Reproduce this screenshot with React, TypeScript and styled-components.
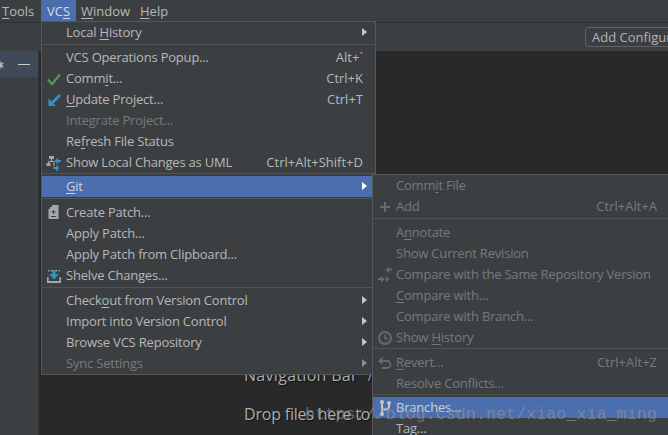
import React from "react";
import styled, { createGlobalStyle } from "styled-components";

const Global = createGlobalStyle`
  html, body { margin: 0; padding: 0; background: #3c3f41; }
  body { width: 668px; height: 435px; overflow: hidden; font-family: "Open Sans", "Noto Sans", sans-serif; }
  u { text-decoration: underline; text-underline-offset: 2px; text-decoration-thickness: 1px; }
`;

const Page = styled.div`
  position: relative;
  width: 668px;
  height: 435px;
  overflow: hidden;
  display: flex;
  flex-direction: column;
  color: #b6b8ba;
  font-size: 13px;
`;
const MenuBar = styled.div`
  height: 22px;
  flex: none;
  display: flex;
  background: #3c3f41;
  border-bottom: 1px solid #2f3132;
  padding-left: 2px;
`;
const MenuTitle = styled.div<{ $active?: boolean; $w: number; $gap?: number }>`
  width: ${(p) => p.$w}px;
  margin-right: ${(p) => p.$gap ?? 0}px;
  height: 21px;
  line-height: 22px;
  text-align: center;
  background: ${(p) => (p.$active ? "#4b6eaf" : "transparent")};
  color: ${(p) => (p.$active ? "#d6dce6" : "#b6b8ba")};
  white-space: nowrap;
`;
const ToolBar = styled.div`
  height: 28px;
  flex: none;
  display: flex;
  align-items: center;
  justify-content: flex-end;
  background: #3c3f41;
`;
const ConfigButton = styled.div`
  width: 100px;
  height: 20px;
  margin-right: -17px;
  box-sizing: border-box;
  border: 1px solid #5e6163;
  border-radius: 3px;
  padding-left: 6px;
  line-height: 19px;
  white-space: nowrap;
  overflow: hidden;
  color: #b0b3b5;
`;
const Body = styled.div`
  flex: 1;
  display: flex;
  min-height: 0;
`;
const Sidebar = styled.div`
  width: 38px;
  flex: none;
  background: #3c3f41;
  border-right: 1px solid #323435;
`;
const SideHeader = styled.div`
  height: 26px;
  background: #3e4a57;
  display: flex;
  align-items: center;
  justify-content: space-between;
  padding: 0 8px 0 0;
`;
const SideGlyph = styled.span`
  color: #b0b5ba;
  font-size: 11px;
  line-height: 1;
  margin-left: -5px;
`;
const HideBar = styled.span`
  width: 12px;
  height: 1px;
  background: #c8cacc;
`;
const Editor = styled.div`
  flex: 1;
  background: #292929;
  display: flex;
  flex-direction: column;
  padding: 314px 0 0 205px;
  color: #a9adb0;
  font-size: 16px;
  text-shadow: 1px 1px 1px #111;
`;
const Hint = styled.div<{ $gap?: number; $track: number }>`
  height: 20px;
  line-height: 20px;
  margin-bottom: ${(p) => p.$gap ?? 0}px;
  letter-spacing: ${(p) => p.$track}px;
  white-space: nowrap;
`;
const Slash = styled.span`
  color: #5a9bd8;
  margin-left: 10px;
`;
const Popup = styled.div<{ $left: number; $top: number; $w: number; $h: number }>`
  position: absolute;
  left: ${(p) => p.$left}px;
  top: ${(p) => p.$top}px;
  width: ${(p) => p.$w}px;
  height: ${(p) => p.$h}px;
  box-sizing: border-box;
  background: #3c3f41;
  border: 1px solid #555759;
  overflow: hidden;
`;
const Row = styled.div<{ $sel?: boolean; $off?: boolean; $pad: number }>`
  position: relative;
  height: 21px;
  box-sizing: border-box;
  display: flex;
  align-items: center;
  padding: 0 12px 2px ${(p) => p.$pad}px;
  background: ${(p) => (p.$sel ? "#4b6eaf" : "transparent")};
  color: ${(p) => (p.$off ? "#777a7c" : p.$sel ? "#c9d2e0" : "#b6b8ba")};
  white-space: nowrap;
`;
const Label = styled.span`
  flex: 1;
  letter-spacing: -0.2px;
`;
const Shortcut = styled.span`
  margin-right: 0;
`;
const Arrow = styled.span<{ $off?: boolean; $white?: boolean }>`
  position: absolute;
  right: 8px;
  top: 6px;
  width: 0;
  height: 0;
  border-left: 5px solid ${(p) => (p.$white ? "#ffffff" : p.$off ? "#8a8c8e" : "#c4c6c8")};
  border-top: 4px solid transparent;
  border-bottom: 4px solid transparent;
`;
const IconSlot = styled.span`
  position: absolute;
  left: 3px;
  top: 2px;
  width: 18px;
  height: 18px;
  display: block;
  svg { display: block; }
`;
const Sep = styled.div<{ $h: number; $at: number }>`
  height: ${(p) => p.$h}px;
  box-sizing: border-box;
  padding-top: ${(p) => p.$at}px;
  &::before {
    content: "";
    display: block;
    height: 1px;
    background: #515355;
  }
`;
const Watermark = styled.div`
  position: absolute;
  left: 305px;
  top: 405px;
  font-family: "Liberation Mono", monospace;
  font-size: 16.75px;
  line-height: 20px;
  color: rgba(150, 152, 155, 0.62);
  white-space: nowrap;
`;

const Mn = ({ t }: { t: string }) => {
  const i = t.indexOf("_");
  if (i < 0) return <>{t}</>;
  return (
    <>
      {t.slice(0, i)}
      <u>{t[i + 1]}</u>
      {t.slice(i + 2)}
    </>
  );
};

const icons: Record<string, React.ReactNode> = {
  check: (
    <svg width="18" height="18" viewBox="0 0 18 18">
      <path d="M3 9.5 L7 14 L15 4.5" fill="none" stroke="#499c54" strokeWidth="2.4" />
    </svg>
  ),
  update: (
    <svg width="18" height="18" viewBox="0 0 18 18">
      <path d="M15 4 L7.5 11.5" fill="none" stroke="#3592c4" strokeWidth="2.6" />
      <path d="M3.5 7.5 V15 H11 Z" fill="#3592c4" />
    </svg>
  ),
  uml: (
    <svg width="18" height="18" viewBox="0 0 18 18">
      <path d="M4 2h5v3H4z M1.5 9h4v3h-4z" fill="#a5a8aa" />
      <path d="M6.5 5v2.5M3.5 9V7.5H9V12" fill="none" stroke="#a5a8aa" />
      <path d="M16 6h-3V3.5L9.5 7l3.5 3.5V8h3z M11 11v2H8v2h3v2.5l3.5-3.5z" fill="#3592c4" />
    </svg>
  ),
  patch: (
    <svg width="18" height="18" viewBox="0 0 18 18">
      <path d="M7 1h6.500v14H3.500V5H5V3h2z" fill="#a5a8aa" />
      <path d="M8.500 6v4M6.500 8h4M6 12.500h5" stroke="#3c3f41" strokeWidth="1.100" fill="none" />
    </svg>
  ),
  shelve: (
    <svg width="18" height="18" viewBox="0 0 18 18">
      <path d="M2 10v6h14v-6h-1.600v4H3.600v-4z" fill="#a5a8aa" />
      <path d="M3 3h1.500v1.500H3z M6 3h1.500v1.500H6z M10.500 3H12v1.500h-1.500z M13.500 3H15v1.500h-1.500z" fill="#a5a8aa" />
      <path d="M7.500 3h3v4H14l-5 5.500L4 7h3.500z" fill="#3592c4" />
    </svg>
  ),
  plus: (
    <svg width="18" height="18" viewBox="0 0 18 18">
      <path d="M9 4v10M4 9h10" stroke="#666a6c" strokeWidth="2" fill="none" />
    </svg>
  ),
  compare: (
    <svg width="18" height="18" viewBox="0 0 18 18">
      <path d="M16 2.500v2h-3v2.500L9.500 4l3.500-3v1.500z M2 14h3v2.500L9 13 5 10v2H2z M10 10l3.500 3L10 16z" fill="#666a6c" />
    </svg>
  ),
  history: (
    <svg width="18" height="18" viewBox="0 0 18 18">
      <circle cx="9" cy="9" r="6" fill="none" stroke="#666a6c" strokeWidth="2" />
      <path d="M9 5.500V9.500H12" fill="none" stroke="#666a6c" strokeWidth="1.500" />
    </svg>
  ),
  revert: (
    <svg width="18" height="18" viewBox="0 0 18 18">
      <path d="M4 7h7a3.500 3.500 0 0 1 0 7H6" fill="none" stroke="#666a6c" strokeWidth="1.800" />
      <path d="M6.500 2.500v8.500L2 7z" fill="#666a6c" />
    </svg>
  ),
  branch: (
    <svg width="18" height="18" viewBox="0 0 18 18">
      <path d="M6 3v12M13 4v3.500q0 3-3.500 3H6" fill="none" stroke="#c4c8cc" strokeWidth="2" />
      <circle cx="6" cy="3" r="2" fill="#c4c8cc" />
      <circle cx="6" cy="15" r="2" fill="#c4c8cc" />
      <circle cx="13" cy="4" r="2" fill="#c4c8cc" />
    </svg>
  ),
};

type Item =
  | { sep: [number, number] }
  | { t: string; k?: string; off?: boolean; arrow?: boolean; icon?: string; sel?: boolean };

const mainItems: Item[] = [
  { t: "Local _History", arrow: true },
  { sep: [4, 1] },
  { t: "VCS Operations Popup...", k: "Alt+`" },
  { t: "Comm_it...", k: "Ctrl+K", icon: "check" },
  { t: "_Update Project...", k: "Ctrl+T", icon: "update" },
  { t: "Integrate Project...", off: true },
  { t: "Re_fresh File Status" },
  { t: "Show Local Changes as UML", k: "Ctrl+Alt+Shift+D", icon: "uml" },
  { sep: [3, 0] },
  { t: "_Git", arrow: true, sel: true },
  { sep: [5, 1] },
  { t: "Create Patch...", icon: "patch" },
  { t: "Apply Patch..." },
  { t: "Apply Patch from Clipboard..." },
  { t: "Shelve Changes...", icon: "shelve" },
  { sep: [4, 1] },
  { t: "Check_out from Version Control", arrow: true },
  { t: "Import into Version Control", arrow: true },
  { t: "Browse VCS Repository", arrow: true },
  { t: "Sync Settings", arrow: true, off: true },
];

const subItems: Item[] = [
  { t: "Comm_it File", off: true },
  { t: "Add", k: "Ctrl+Alt+A", off: true, icon: "plus" },
  { sep: [5, 1] },
  { t: "A_nnotate", off: true },
  { t: "Show Current Revision", off: true },
  { t: "Compare with the Same Repository Version", off: true, icon: "compare" },
  { t: "_Compare with...", off: true },
  { t: "Compare with Branch...", off: true },
  { t: "Show _History", off: true, icon: "history" },
  { sep: [4, 0] },
  { t: "_Revert...", k: "Ctrl+Alt+Z", off: true, icon: "revert" },
  { t: "Resolve Conflicts...", off: true },
  { sep: [3, 0] },
  { t: "Branches...", sel: true, icon: "branch" },
  { t: "Tag..." },
];

const MenuList = ({ items, pad }: { items: Item[]; pad: number }) => (
  <>
    {items.map((it, i) =>
      "sep" in it ? (
        <Sep key={i} $h={it.sep[0]} $at={it.sep[1]} />
      ) : (
        <Row key={i} $sel={it.sel} $off={it.off} $pad={pad}>
          {it.icon && <IconSlot>{icons[it.icon]}</IconSlot>}
          <Label>
            <Mn t={it.t} />
          </Label>
          {it.k && <Shortcut>{it.k}</Shortcut>}
          {it.arrow && <Arrow $off={it.off} $white={it.sel} />}
        </Row>
      )
    )}
  </>
);

export default function App() {
  return (
    <>
      <Global />
      <Page>
        <MenuBar>
          <MenuTitle $w={32} $gap={7}><Mn t="_Tools" /></MenuTitle>
          <MenuTitle $w={35} $gap={5} $active>VC<u>S</u></MenuTitle>
          <MenuTitle $w={49} $gap={10}><Mn t="_Window" /></MenuTitle>
          <MenuTitle $w={28}><Mn t="_Help" /></MenuTitle>
        </MenuBar>
        <ToolBar>
          <ConfigButton>Add Configuration...</ConfigButton>
        </ToolBar>
        <Body>
          <Sidebar>
            <SideHeader>
              <SideGlyph>✱</SideGlyph>
              <HideBar />
            </SideHeader>
          </Sidebar>
          <Editor>
            <Hint $gap={19} $track={0.3}>Navigation Bar<Slash>/</Slash></Hint>
            <Hint $track={-0.2}>Drop files here to</Hint>
          </Editor>
        </Body>
        <Popup $left={41} $top={21} $w={335} $h={354}>
          <MenuList items={mainItems} pad={24} />
        </Popup>
        <Popup $left={372} $top={174} $w={298} $h={270}>
          <MenuList items={subItems} pad={23} />
        </Popup>
        <Watermark>https://blog.csdn.net/xiao_xia_ming</Watermark>
      </Page>
    </>
  );
}
